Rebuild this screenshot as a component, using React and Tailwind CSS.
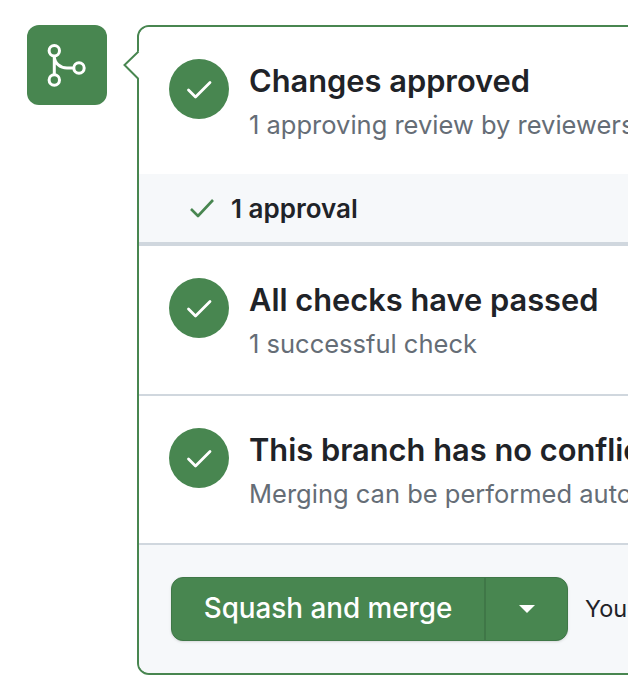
const green = '#488650'

function CheckBadge() {
  return (
    <div className="w-[60px] h-[60px] rounded-full bg-[#488650] flex items-center justify-center shrink-0">
      <svg width="60" height="60" viewBox="0 0 60 60" fill="none">
        <path d="M19.5 31 L26.5 38 L41 23.5" stroke="#fff" strokeWidth="2.8" strokeLinecap="round" strokeLinejoin="round" />
      </svg>
    </div>
  )
}

function Row({ title, sub, className }) {
  return (
    <div className={`flex items-start gap-5 pl-[30px] bg-white ${className}`}>
      <CheckBadge />
      <div className="whitespace-nowrap pt-[4px]">
        <h3 className="text-[30.8px] leading-[36px] font-semibold text-[#1f2328]">{title}</h3>
        <p className="text-[25.5px] leading-[32px] text-[#656d76] mt-[10px]">{sub}</p>
      </div>
    </div>
  )
}

export default function App() {
  return (
    <div className="w-[628px] h-[694px] overflow-hidden bg-white flex items-start gap-[30px] pl-[27px] pt-[25px] font-['Inter',sans-serif]">
      <div className="w-[80px] h-[80px] rounded-xl bg-[#488650] shrink-0">
        <svg width="80" height="80" viewBox="0 0 80 80" fill="none" stroke="#fff" strokeWidth="3">
          <circle cx="27.3" cy="25.7" r="5.2" />
          <circle cx="27.3" cy="55" r="5.2" />
          <circle cx="52" cy="43" r="5.2" />
          <path d="M27.3 31 V49.8 M27.3 31 C27.3 38 33 43 40 43 H46.8" />
        </svg>
      </div>

      <div className="relative w-[800px] h-[650px] shrink-0 rounded-xl border-2 border-[#488650] bg-white">
        <svg className="absolute left-[-16px] top-[24px]" width="17" height="30" viewBox="0 0 17 30" fill="none">
          <path d="M16 0 L2 14 L16 28 Z" fill="#fff" />
          <path d="M15.5 0.5 L1.5 14 L15.5 28" stroke={green} strokeWidth="2" />
        </svg>
        <div className="rounded-[10px] overflow-hidden h-full flex flex-col">
          <Row title="Changes approved" sub="1 approving review by reviewers with write access" className="h-[147px] pt-[32px]" />
          <div className="h-[68px] bg-[#f6f8fa] flex items-center gap-[16px] pl-[50px]">
            <svg width="26" height="20" viewBox="0 0 26 20" fill="none">
              <path d="M2 11 L9 18 L24 2" stroke={green} strokeWidth="2.6" strokeLinejoin="round" />
            </svg>
            <span className="text-[26px] font-semibold text-[#1f2328]">1 approval</span>
          </div>
          <Row title="All checks have passed" sub="1 successful check" className="h-[152px] border-t-4 border-[#d0d7de] pt-[32px]" />
          <Row title="This branch has no conflicts with the base branch" sub="Merging can be performed automatically." className="h-[149px] border-t-2 border-[#d0d7de] pt-[32px]" />
          <div className="flex-1 bg-[#f6f8fa] border-t-2 border-[#d0d7de] flex items-center gap-[17px] pl-[32px]">
            <div className="flex h-[64px] w-[397px] shrink-0 rounded-xl border border-[#3f7747] bg-[#488650] shadow-sm text-white">
              <div className="w-[314px] border-r-2 border-[#3f7747] flex items-center justify-center text-[27.8px] font-medium">Squash and merge</div>
              <div className="flex-1 flex items-center justify-center">
                <svg width="16" height="8" viewBox="0 0 16 8"><path d="M0 0 H16 L8 8 Z" fill="#fff" /></svg>
              </div>
            </div>
            <span className="text-[23.5px] whitespace-nowrap text-[#1f2328]">You can also open this in GitHub Desktop</span>
          </div>
        </div>
      </div>
    </div>
  )
}
